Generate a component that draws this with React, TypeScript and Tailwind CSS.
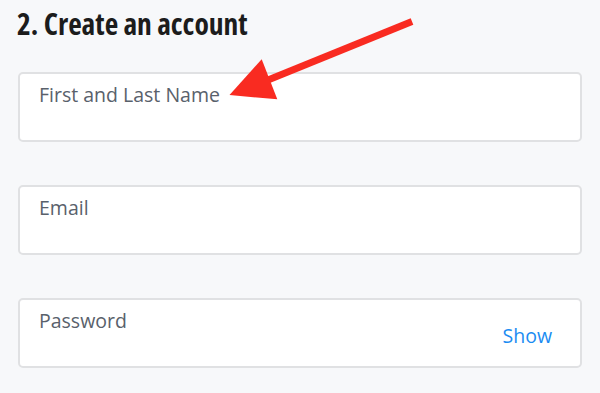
const fields = [
  { label: "First and Last Name" },
  { label: "Email" },
  { label: "Password", action: "Show" },
];

function Field({ label, action }: { label: string; action?: string }) {
  return (
    <div className="relative flex h-[70px] items-start justify-between rounded-[5px] border-2 border-[#e0e1e3] bg-white pl-[19px] pr-[28px] pt-[9px]">
      <span className="text-[19.5px] leading-6 text-[#59616b]">{label}</span>
      {action && (
        <button className="self-center -mt-[4px] text-[19.5px] leading-6 text-[#1b8cf2]">{action}</button>
      )}
    </div>
  );
}

export default function App() {
  return (
    <div className="relative h-[393px] w-[600px] overflow-hidden bg-[#f7f8fa] px-[18px] font-['Open_Sans',sans-serif]">
      <h2 className="mt-[7px] -ml-[1px] text-[29.5px] leading-[34px] font-bold text-[#1c1c1c] [font-stretch:75%]">
        2. Create an account
      </h2>
      <div className="mt-[31px] flex flex-col gap-[43px]">
        {fields.map((f) => (
          <Field key={f.label} label={f.label} action={f.action} />
        ))}
      </div>

      {/* annotation arrow */}
      <svg className="pointer-events-none absolute inset-0" width="600" height="393" viewBox="0 0 600 393">
        <line x1="412" y1="21.5" x2="268" y2="80" stroke="#f92b21" strokeWidth="7" />
        <polygon points="229.5,95 261.7,59.3 277.3,99.3" fill="#f92b21" />
      </svg>
    </div>
  );
}
